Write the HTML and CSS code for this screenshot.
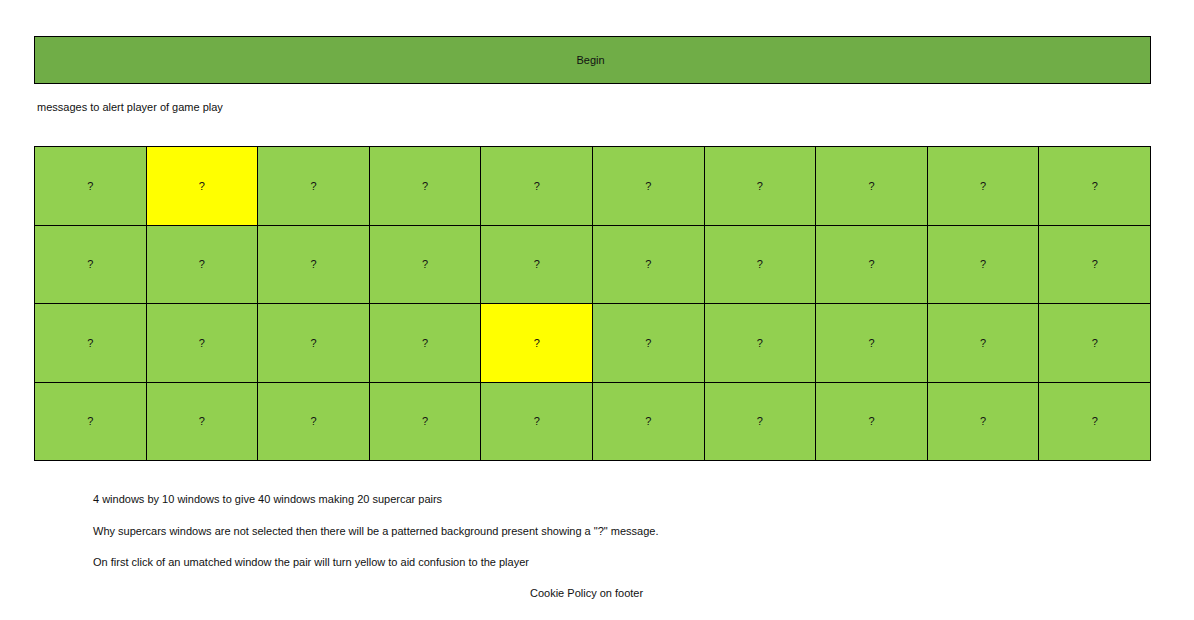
FILE: index.html
```html
<!DOCTYPE html>
<html>
<head>
<meta charset="utf-8">
<link rel="stylesheet" href="styles.css">
</head>
<body>
<div class="page">
  <div class="begin">Begin</div>
  <p class="message">messages to alert player of game play</p>
  <div class="board">
    <div class="cell">?</div><div class="cell yellow">?</div><div class="cell">?</div><div class="cell">?</div><div class="cell">?</div><div class="cell">?</div><div class="cell">?</div><div class="cell">?</div><div class="cell">?</div><div class="cell">?</div>
    <div class="cell">?</div><div class="cell">?</div><div class="cell">?</div><div class="cell">?</div><div class="cell">?</div><div class="cell">?</div><div class="cell">?</div><div class="cell">?</div><div class="cell">?</div><div class="cell">?</div>
    <div class="cell">?</div><div class="cell">?</div><div class="cell">?</div><div class="cell">?</div><div class="cell yellow">?</div><div class="cell">?</div><div class="cell">?</div><div class="cell">?</div><div class="cell">?</div><div class="cell">?</div>
    <div class="cell">?</div><div class="cell">?</div><div class="cell">?</div><div class="cell">?</div><div class="cell">?</div><div class="cell">?</div><div class="cell">?</div><div class="cell">?</div><div class="cell">?</div><div class="cell">?</div>
  </div>
  <div class="notes">
    <p>4 windows by 10 windows to give 40 windows making 20 supercar pairs</p>
    <p>Why supercars windows are not selected then there will be a patterned background present showing a "?" message.</p>
    <p>On first click of an umatched window the pair will turn yellow to aid confusion to the player</p>
  </div>
  <div class="footer">Cookie Policy on footer</div>
</div>
</body>
</html>
```
FILE: styles.css
```css
html, body {
  margin: 0;
  padding: 0;
  background: #ffffff;
}
.page {
  font-family: "Liberation Sans", Arial, sans-serif;
  font-size: 11px;
  color: #111;
  padding: 36px 0 0 34px;
  width: 1117px;
}
.begin {
  height: 46px;
  border: 1px solid #000;
  background: #70ad47;
  display: flex;
  align-items: center;
  justify-content: center;
  padding-right: 4px;
}
.message {
  margin: 17px 0 0 3px;
  line-height: 13px;
  height: 13px;
}
.board {
  margin-top: 32px;
  display: grid;
  grid-template-columns: repeat(10, 1fr);
  grid-auto-rows: 77.5px;
  gap: 1px;
  padding: 1px;
  background: #000;
}
.cell {
  background: #92d050;
  display: flex;
  align-items: center;
  justify-content: center;
}
.cell.yellow {
  background: #ffff00;
}
.notes {
  margin-top: 32px;
  padding-left: 59px;
}
.notes p {
  margin: 0 0 18px 0;
  line-height: 13px;
}
.notes p:first-child {
  margin-bottom: 19px;
}
.footer {
  margin-top: 2px;
  padding-left: 496px;
  line-height: 13px;
}
```
